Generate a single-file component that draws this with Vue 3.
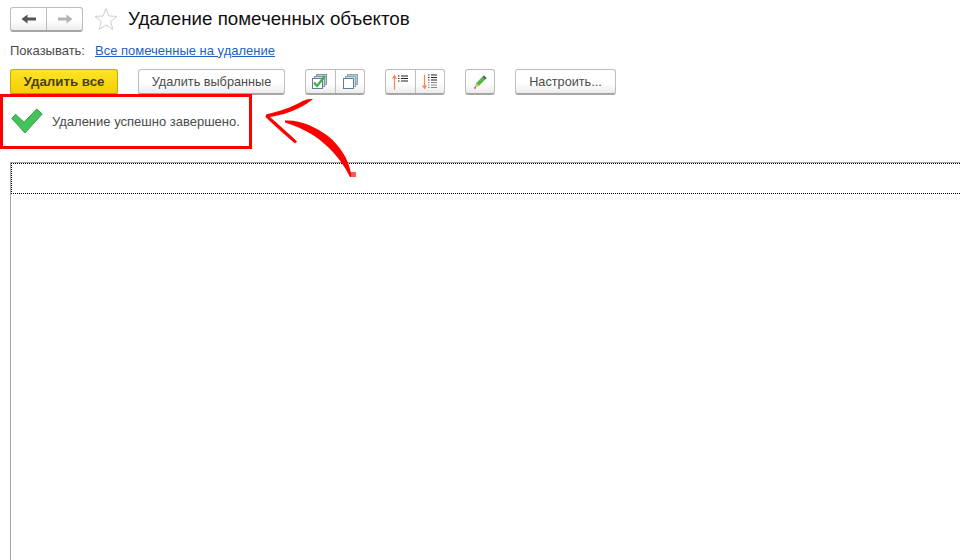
<script setup>
const title = 'Удаление помеченных объектов'
</script>

<template>
  <div class="page">
    <header class="head">
      <div class="group nav">
        <button class="btn seg nav-btn">
          <svg width="16" height="12" viewBox="0 0 16 12"><path d="M0.5 6 L6.5 1.5 V4.5 H15 V7.5 H6.5 V10.5 Z" fill="#555"/></svg>
        </button>
        <button class="btn seg nav-btn">
          <svg width="16" height="12" viewBox="0 0 16 12"><path d="M15.5 6 L9.5 1.5 V4.5 H1 V7.5 H9.5 V10.5 Z" fill="#b4b4b4"/></svg>
        </button>
      </div>
      <svg class="star" width="24" height="24" viewBox="0 0 24 24"><path d="M12 1.5 L14.9 9 L23 9.4 L16.7 14.5 L18.9 22.4 L12 18 L5.1 22.4 L7.3 14.5 L1 9.4 L9.1 9 Z" fill="#fff" stroke="#cfcfcf" stroke-width="1"/></svg>
      <h1 class="title">{{ title }}</h1>
    </header>

    <div class="filter">
      <span class="filter-label">Показывать:</span>
      <a class="filter-link">Все помеченные на удаление</a>
    </div>

    <div class="toolbar">
      <button class="btn primary">Удалить все</button>
      <button class="btn text-btn sel">Удалить выбранные</button>
      <div class="group">
        <button class="btn seg icon-btn">
          <svg width="16" height="16" viewBox="0 0 16 16">
            <rect x="4.5" y="0.5" width="10" height="10" fill="#b9cbd7" stroke="#7d97aa"/>
            <rect x="2.5" y="2.5" width="10" height="10" fill="#d0dde5" stroke="#7d97aa"/>
            <rect x="0.5" y="4.5" width="10" height="10" fill="#fff" stroke="#5f7f96"/>
            <path d="M2 8.5 L5 12 L13 2" fill="none" stroke="#3fae49" stroke-width="2.2"/>
          </svg>
        </button>
        <button class="btn seg icon-btn">
          <svg width="16" height="16" viewBox="0 0 16 16">
            <rect x="5.5" y="0.5" width="10" height="10" fill="#b9cbd7" stroke="#8fa6b6"/>
            <rect x="3.5" y="2.5" width="10" height="10" fill="#d0dde5" stroke="#8fa6b6"/>
            <rect x="1.5" y="4.5" width="10" height="10" fill="#fff" stroke="#5f7f96"/>
          </svg>
        </button>
      </div>
      <div class="group sort">
        <button class="btn seg icon-btn">
          <svg width="16" height="16" viewBox="0 0 16 16">
            <path d="M2.5 3 V15.5" stroke="#f08a4b" stroke-width="1.2" fill="none"/>
            <path d="M0 4.5 L2.5 0.5 L5 4.5 Z" fill="#f08a4b"/>
            <path d="M6 2 H7.5 M9 2 H16 M6 4.5 H7.5 M9 4.5 H16 M6 7 H7.5 M9 7 H16" stroke="#222" stroke-width="1.2"/>
          </svg>
        </button>
        <button class="btn seg icon-btn">
          <svg width="16" height="16" viewBox="0 0 16 16">
            <path d="M2.5 0.5 V12" stroke="#f08a4b" stroke-width="1.2" fill="none"/>
            <path d="M0 11.5 L2.5 15.5 L5 11.5 Z" fill="#f08a4b"/>
            <path d="M6 1 H7.5 M9 1 H15 M6 3.5 H7.5 M9 3.5 H15 M6 6 H7.5 M9 6 H15" stroke="#222" stroke-width="1.2"/>
            <path d="M6 8.5 H7.5 M9 8.5 H15 M6 11 H7.5 M9 11 H15 M6 13.5 H7.5 M9 13.5 H15" stroke="#888" stroke-width="1.2"/>
          </svg>
        </button>
      </div>
      <button class="btn single pencil">
        <svg width="16" height="16" viewBox="0 0 20 20">
          <path d="M13 3.5 L16.5 7 L8.5 15 L5 11.5 Z" fill="#58b947"/>
          <path d="M13 3.5 L15 1.8 L18.3 5.2 L16.5 7 Z" fill="#44525c"/>
          <path d="M5 11.5 L8.5 15 L3.5 17 Z" fill="#e9b36a"/>
          <path d="M3.9 15.4 L5 17.9 L2.5 18.5 Z" fill="#444"/>
        </svg>
      </button>
      <button class="btn text-btn setup">Настроить...</button>
    </div>

    <div class="message">
      <svg class="check" width="32" height="26" viewBox="0 0 32 26">
        <path d="M0.8 10.5 L4.5 6.2 L13 14.2 L25.7 1 L31.2 6 L14 25 Z" fill="#43c35a" stroke="#3a9e4c" stroke-width="1" stroke-linejoin="round"/>
      </svg>
      <span class="msg-text">Удаление успешно завершено.</span>
    </div>

    <div class="table">
      <div class="table-row"></div>
    </div>

    <div class="red-box"></div>
    <svg class="arrow" width="110" height="90" viewBox="260 95 110 90">
      <path d="M313 99 C305 99 303 101 297 104 C287 109 276 112 266 114.5 L265.5 117 C275 126 285 135 295 143.5 L297 141.5 C288 133 278 124 270 117 C280 115.5 290 112.5 298 108.5 C304 105.5 309 102.5 313 99 Z" fill="#fe0000"/>
      <path d="M285 120.5 C300 119.5 316 127 328 136 C340 146 348 158 351 173 L351 177 L350 177 C344 165 337 156 329 148 C317 136 301 127 285 122.5 Z" fill="#fe0000"/>
      <rect x="351" y="172" width="5" height="5" fill="#ff5a5a"/>
    </svg>
  </div>
</template>

<style>
html, body { margin: 0; background: #fff; }
</style>

<style scoped>
.page {
  position: relative;
  width: 960px;
  height: 560px;
  overflow: hidden;
  background: #fff;
  font-family: "Liberation Sans", Arial, sans-serif;
  color: #4b4b4b;
  padding: 6px 0 0 10px;
  box-sizing: border-box;
}
.head {
  display: flex;
  align-items: center;
  height: 26px;
}
.group {
  display: flex;
  height: 26px;
  box-sizing: border-box;
  border: 1px solid #bdbdbd;
  border-bottom: 2px solid #a6a6a6;
  border-radius: 3px;
  background: linear-gradient(#fff 55%, #ececec);
}
.nav { height: 25px; width: 73px; }
.btn {
  font-family: inherit;
  padding: 0;
  margin: 0;
  cursor: pointer;
}
.seg {
  border: 0;
  background: none;
  display: flex;
  align-items: center;
  justify-content: center;
}
.seg + .seg { border-left: 1px solid #bdbdbd; }
.nav-btn { flex: 1; }
.star { margin: 0 10px 0 11px; }
.title {
  margin: 0;
  font-weight: 400;
  font-size: 18.75px;
  color: #111;
  white-space: nowrap;
}
.filter {
  display: flex;
  align-items: center;
  height: 16px;
  margin-top: 10px;
  font-size: 13px;
}
.filter-label { width: 85px; color: #4a4a4a; }
.filter-link { color: #1f5fbf; text-decoration: underline; }
.toolbar {
  display: flex;
  align-items: stretch;
  height: 26px;
  margin-top: 11px;
}
.toolbar .btn.primary,
.toolbar .btn.text-btn,
.toolbar .btn.single {
  box-sizing: border-box;
  border: 1px solid #bdbdbd;
  border-bottom: 2px solid #a6a6a6;
  border-radius: 3px;
  background: linear-gradient(#fff 55%, #ececec);
  font-size: 12.7px;
  color: #4b4b4b;
  display: flex;
  align-items: center;
  justify-content: center;
  flex: none;
}
.toolbar .btn.primary {
  width: 108px;
  background: linear-gradient(#fde428, #f2d000);
  border-color: #c9a900;
  border-bottom-color: #b89a00;
  font-weight: 700;
  font-size: 13.3px;
  color: #4a4020;
}
.toolbar .btn.sel { width: 147px; margin-left: 20px; }
.toolbar .group { margin-left: 20px; width: 60px; flex: none; }
.toolbar .icon-btn { flex: 1; }
.toolbar .btn.single { width: 30px; margin-left: 20px; }
.toolbar .btn.setup { width: 101px; margin-left: 20px; }
.message {
  display: flex;
  align-items: center;
  height: 32px;
  margin-top: 10px;
  font-size: 13px;
  color: #4b4b4b;
}
.check { margin-left: 1px; }
.msg-text { margin-left: 9px; }
.table {
  margin-top: 25px;
  height: 400px;
  border-top: 1px solid #a6a6a6;
  border-left: 1px solid #a6a6a6;
}
.table-row {
  height: 31px;
  box-sizing: border-box;
  border-top: 1px dotted #000;
  border-left: 1px dotted #000;
  border-bottom: 1px dotted #000;
}
.red-box {
  position: absolute;
  left: 0;
  top: 94px;
  width: 252px;
  height: 55px;
  box-sizing: border-box;
  border: 3.5px solid #fe0000;
}
.arrow {
  position: absolute;
  left: 260px;
  top: 95px;
}
</style>
